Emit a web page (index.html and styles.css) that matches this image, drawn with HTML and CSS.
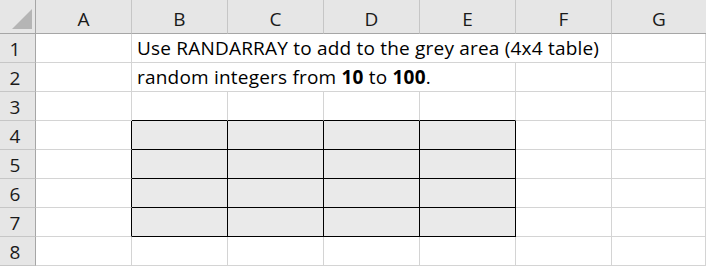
FILE: index.html
```html
<!DOCTYPE html>
<html>
<head>
<meta charset="utf-8">
<link rel="stylesheet" href="styles.css">
</head>
<body>
<div class="sheet">
  <div class="corner"><svg class="tri" width="36" height="34" viewBox="0 0 36 34"><polygon points="12,29 32,29 32,9" fill="#b5b5b5"/></svg></div>
  <div class="ch">A</div><div class="ch">B</div><div class="ch">C</div><div class="ch">D</div><div class="ch">E</div><div class="ch">F</div><div class="ch last">G</div>

  <div class="rh">1</div><div class="c"></div><div class="c txt span5">Use RANDARRAY to add to the grey area (4x4 table)</div><div class="c"></div>
  <div class="rh">2</div><div class="c"></div><div class="c txt span4">random integers from <b>10</b> to <b>100</b>.</div><div class="c"></div><div class="c"></div>
  <div class="rh">3</div><div class="c"></div><div class="c tt"></div><div class="c tt"></div><div class="c tt"></div><div class="c tt"></div><div class="c"></div><div class="c"></div>
  <div class="rh">4</div><div class="c tl"></div><div class="c g"></div><div class="c g"></div><div class="c g"></div><div class="c g"></div><div class="c"></div><div class="c"></div>
  <div class="rh">5</div><div class="c tl"></div><div class="c g"></div><div class="c g"></div><div class="c g"></div><div class="c g"></div><div class="c"></div><div class="c"></div>
  <div class="rh">6</div><div class="c tl"></div><div class="c g"></div><div class="c g"></div><div class="c g"></div><div class="c g"></div><div class="c"></div><div class="c"></div>
  <div class="rh">7</div><div class="c tl"></div><div class="c g"></div><div class="c g"></div><div class="c g"></div><div class="c g"></div><div class="c"></div><div class="c"></div>
  <div class="rh">8</div><div class="c"></div><div class="c"></div><div class="c"></div><div class="c"></div><div class="c"></div><div class="c"></div><div class="c"></div>
</div>
</body>
</html>
```
FILE: styles.css
```css
html, body {
  margin: 0;
  padding: 0;
  background: #fff;
}
body {
  font-family: "Open Sans", "Liberation Sans", Arial, sans-serif;
  font-size: 19px;
  color: #000;
  overflow: hidden;
}
.sheet {
  display: grid;
  grid-template-columns: 36px repeat(6, 96px) 1fr;
  grid-template-rows: 34px repeat(8, 29px);
  width: 706px;
}
.corner {
  background: #e6e6e6;
  border-right: 1px solid #a6a6a6;
  border-bottom: 1px solid #a6a6a6;
  position: relative;
}
.tri {
  position: absolute;
  left: 0;
  top: 0;
}
.ch {
  background: #e6e6e6;
  border-right: 1px solid #c6c6c6;
  border-bottom: 1px solid #a6a6a6;
  display: flex;
  align-items: center;
  justify-content: center;
  padding-top: 5px;
  color: #1a1a1a;
}
.ch.last {
  border-right: none;
}
.rh {
  background: #e6e6e6;
  border-right: 1px solid #a6a6a6;
  border-bottom: 1px solid #c6c6c6;
  display: flex;
  align-items: center;
  justify-content: center;
  padding-right: 5px;
  padding-top: 1px;
  color: #1a1a1a;
}
.c {
  border-right: 1px solid #d4d4d4;
  border-bottom: 1px solid #d4d4d4;
}
.txt {
  white-space: nowrap;
  padding-left: 5px;
  padding-top: 0;
  line-height: 28px;
  letter-spacing: 0.2px;
}
.span5 {
  grid-column: span 5;
}
.span4 {
  grid-column: span 4;
}
.tt {
  border-bottom-color: #000;
}
.tl {
  border-right-color: #000;
}
.g {
  background: #eaeaea;
  border-right-color: #000;
  border-bottom-color: #000;
}
```
